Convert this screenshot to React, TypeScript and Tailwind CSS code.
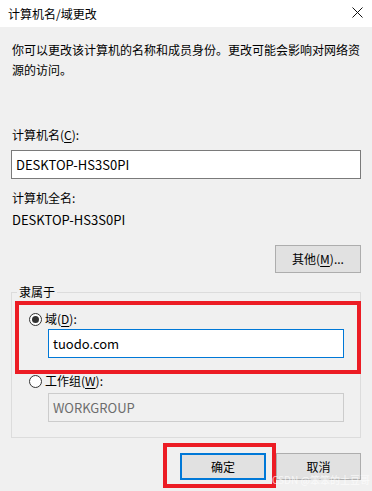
const font = "font-['Microsoft_YaHei','Noto_Sans_CJK_SC',sans-serif]";

const Radio = ({ checked }: { checked?: boolean }) => (
  <span className="w-[13px] h-[13px] rounded-full border border-[#333] bg-white flex items-center justify-center">
    {checked && <span className="w-[7px] h-[7px] rounded-full bg-[#333]" />}
  </span>
);

export default function App() {
  return (
    <div className={`relative w-[372px] h-[491px] overflow-hidden bg-[#f0f0f0] text-[12px] text-black ${font}`}>
      {/* title bar */}
      <div className="h-[27px] bg-white flex items-center justify-between pl-[8px] pr-[9px]">
        <span className="leading-[20px]">计算机名/域更改</span>
        <svg width="11" height="11" viewBox="0 0 11 11" className="mb-[2px]">
          <path d="M0.5 0.5 L10.5 10.5 M10.5 0.5 L0.5 10.5" stroke="#111" strokeWidth="1" />
        </svg>
      </div>

      <div className="px-[11px] pt-[13px]">
        <p className="leading-[20px] pl-[1px]">
          你可以更改该计算机的名称和成员身份。更改可能会影响对网络资源的访问。
        </p>

        <div className="mt-[45px] leading-[20px] pl-[1px]">
          计算机名(<span className="underline underline-offset-2">C</span>):
        </div>
        <div className="mt-[5px] h-[29px] border border-[#7a7a7a] bg-white flex items-center pl-[4px] leading-[20px] text-[13px]">
          DESKTOP-HS3S0PI
        </div>

        <div className="mt-[9px] leading-[20px] pl-[1px]">计算机全名:</div>
        <div className="mt-[2px] leading-[20px] pl-[1px] text-[13px]">DESKTOP-HS3S0PI</div>

        <div className="mt-[15px] flex justify-end">
          <button className="w-[86px] h-[28px] border border-[#adadad] bg-[#e1e1e1] leading-[20px]">
            其他(<span className="underline underline-offset-2">M</span>)...
          </button>
        </div>

        <fieldset className="mt-[9px] border border-[#dcdcdc] pb-[15px]">
          <legend className="ml-[5px] px-[2px] leading-[20px]">隶属于</legend>
          <div className="mt-[7px] pl-[17px] h-[20px] flex items-center gap-[3px]">
            <Radio checked />
            <span className="leading-[20px]">
              域(<span className="underline underline-offset-2">D</span>):
            </span>
          </div>
          <div className="ml-[36px] w-[296px] h-[29px] border border-[#0078d7] bg-white flex items-center pl-[4px] text-[13px]">
            tuodo.com
          </div>
          <div className="mt-[13px] pl-[17px] h-[20px] flex items-center gap-[3px]">
            <Radio />
            <span className="leading-[20px]">
              工作组(<span className="underline underline-offset-2">W</span>):
            </span>
          </div>
          <div className="mt-[2px] ml-[36px] w-[296px] h-[29px] border border-[#cccccc] bg-[#f0f0f0] flex items-center pl-[4px] text-[13px] text-[#6d6d6d]">
            WORKGROUP
          </div>
        </fieldset>

        <div className="mt-[15px] flex justify-end gap-[10px]">
          <button className="w-[86px] h-[27px] border-2 border-[#0078d7] bg-[#e1e1e1] leading-[14px]">确定</button>
          <button className="w-[85px] h-[27px] border border-[#adadad] bg-[#e1e1e1] leading-[14px]">取消</button>
        </div>
      </div>

      {/* red annotation boxes */}
      <div className="absolute left-[15px] top-[301px] w-[346px] h-[73px] border-4 border-[#ec1c24]" />
      <div className="absolute left-[163px] top-[443px] w-[113px] h-[45px] border-4 border-[#ec1c24]" />

      {/* watermark */}
      <div className="absolute left-[272px] top-[474px] text-[10px] leading-[12px] text-white/70 whitespace-nowrap">
        CSDN @笨笨的土豆哥
      </div>
    </div>
  );
}
